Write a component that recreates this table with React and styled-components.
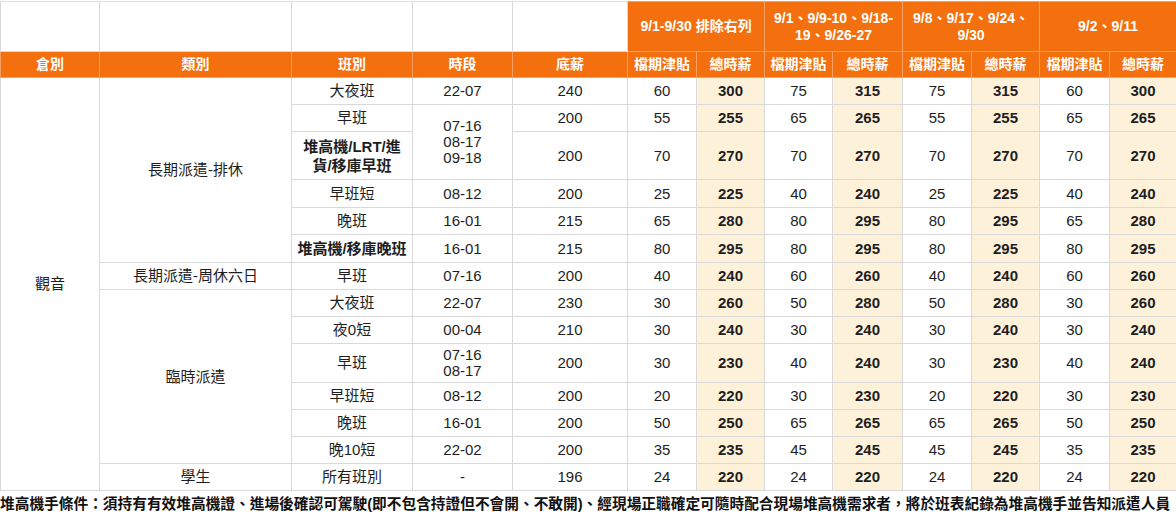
import React from "react";
import styled, { createGlobalStyle } from "styled-components";

const GlobalStyle = createGlobalStyle`
  body {
    margin: 0;
    background: #ffffff;
    font-family: "Liberation Sans", "Noto Sans CJK TC", sans-serif;
    color: #222222;
  }
`;

const colWidths = [99, 192, 121, 100, 115, 69, 68, 68, 70, 69, 68, 70, 67];

const periods = [
  ["9/1-9/30 排除右列"],
  ["9/1、9/9-10、9/18-", "19、9/26-27"],
  ["9/8、9/17、9/24、", "9/30"],
  ["9/2、9/11"],
];

// each row: 班別, 時段 (null = merged with row above), 底薪, then 檔期津貼/總時薪 x4
const rows = [
  { shift: "大夜班", time: ["22-07"], base: 240, pay: [60, 300, 75, 315, 75, 315, 60, 300] },
  { shift: "早班", time: ["07-16", "08-17", "09-18"], timeSpan: 2, base: 200, pay: [55, 255, 65, 265, 55, 255, 65, 265] },
  { shift: ["堆高機/LRT/進", "貨/移庫早班"], bold: true, time: null, base: 200, pay: [70, 270, 70, 270, 70, 270, 70, 270], h: 48 },
  { shift: "早班短", time: ["08-12"], base: 200, pay: [25, 225, 40, 240, 25, 225, 40, 240], h: 28 },
  { shift: "晚班", time: ["16-01"], base: 215, pay: [65, 280, 80, 295, 80, 295, 65, 280] },
  { shift: "堆高機/移庫晚班", bold: true, time: ["16-01"], base: 215, pay: [80, 295, 80, 295, 80, 295, 80, 295], h: 28 },
  { shift: "早班", time: ["07-16"], base: 200, pay: [40, 240, 60, 260, 40, 240, 60, 260] },
  { shift: "大夜班", time: ["22-07"], base: 230, pay: [30, 260, 50, 280, 50, 280, 30, 260] },
  { shift: "夜0短", time: ["00-04"], base: 210, pay: [30, 240, 30, 240, 30, 240, 30, 240] },
  { shift: "早班", time: ["07-16", "08-17"], base: 200, pay: [30, 230, 40, 240, 30, 230, 40, 240], h: 39 },
  { shift: "早班短", time: ["08-12"], base: 200, pay: [20, 220, 30, 230, 20, 220, 30, 230] },
  { shift: "晚班", time: ["16-01"], base: 200, pay: [50, 250, 65, 265, 65, 265, 50, 250] },
  { shift: "晚10短", time: ["22-02"], base: 200, pay: [35, 235, 45, 245, 45, 245, 35, 235] },
  { shift: "所有班別", time: ["-"], base: 196, pay: [24, 220, 24, 220, 24, 220, 24, 220] },
];

// 類別 groups keyed by first row index
const categories = {
  0: { label: "長期派遣-排休", span: 6 },
  6: { label: "長期派遣-周休六日", span: 1 },
  7: { label: "臨時派遣", span: 6 },
  13: { label: "學生", span: 1 },
};

const App = () => {
  return (
    <>
      <GlobalStyle />
      <Page>
        <Table>
          <colgroup>
            {colWidths.map((w, i) => (
              <col key={i} style={{ width: w }} />
            ))}
          </colgroup>
          <thead>
            <HeadRow $h={50}>
              {[0, 1, 2, 3, 4].map((i) => (
                <BlankCell key={i} />
              ))}
              {periods.map((lines, i) => (
                <OrangeCell key={i} colSpan={2}>
                  {lines.map((l, j) => (
                    <Line key={j}>{l}</Line>
                  ))}
                </OrangeCell>
              ))}
            </HeadRow>
            <HeadRow $h={26}>
              {["倉別", "類別", "班別", "時段", "底薪"].map((t) => (
                <OrangeCell key={t}>{t}</OrangeCell>
              ))}
              {periods.map((_, i) => (
                <React.Fragment key={i}>
                  <OrangeCell>檔期津貼</OrangeCell>
                  <OrangeCell>總時薪</OrangeCell>
                </React.Fragment>
              ))}
            </HeadRow>
          </thead>
          <tbody>
            {rows.map((r, i) => (
              <DataRow key={i} $h={r.h || 27}>
                {i === 0 && <Cell rowSpan={rows.length}>觀音</Cell>}
                {categories[i] && (
                  <Cell rowSpan={categories[i].span}>{categories[i].label}</Cell>
                )}
                <Cell $bold={r.bold} $lh={Array.isArray(r.shift) ? 19 : 16}>
                  {Array.isArray(r.shift)
                    ? r.shift.map((l, j) => <Line key={j}>{l}</Line>)
                    : r.shift}
                </Cell>
                {r.time && (
                  <Cell rowSpan={r.timeSpan || 1}>
                    {r.time.map((l, j) => (
                      <Line key={j}>{l}</Line>
                    ))}
                  </Cell>
                )}
                <Cell>{r.base}</Cell>
                {r.pay.map((v, j) =>
                  j % 2 === 1 ? (
                    <Cell key={j} $total $bold>
                      {v}
                    </Cell>
                  ) : (
                    <Cell key={j}>{v}</Cell>
                  )
                )}
              </DataRow>
            ))}
          </tbody>
        </Table>
        <Note>
          堆高機手條件：須持有有效堆高機證、進場後確認可駕駛(即不包含持證但不會開、不敢開)、經現場正職確定可隨時配合現場堆高機需求者，將於班表紀錄為堆高機手並告知派遣人員
        </Note>
      </Page>
    </>
  );
};

// Styled Components
const Page = styled.div`
  width: 1176px;
  height: 516px;
  padding-top: 1px;
  box-sizing: border-box;
  overflow: hidden;
`;

const Table = styled.table`
  width: 1176px;
  table-layout: fixed;
  border-collapse: collapse;
  font-size: 15px;
`;

const HeadRow = styled.tr`
  height: ${({ $h }) => $h}px;
`;

const DataRow = styled.tr`
  height: ${({ $h }) => $h}px;
`;

const BlankCell = styled.th`
  border: 1px solid #d9d9d9;
  border-top-color: #e2e2e2;
  background: #ffffff;
  padding: 0;
`;

const OrangeCell = styled.th`
  background: #f4700e;
  color: #ffffff;
  font-weight: 700;
  font-size: 14px;
  line-height: 17px;
  text-align: center;
  vertical-align: middle;
  padding: 0 2px;
  border: 1px solid #f8a064;
  white-space: nowrap;
`;

const Cell = styled.td`
  border: 1px solid #d9d9d9;
  text-align: center;
  vertical-align: middle;
  padding: 0 2px;
  line-height: ${({ $lh }) => $lh || 16}px;
  font-weight: ${({ $bold }) => ($bold ? 700 : 400)};
  background: ${({ $total }) => ($total ? "#fdf1da" : "#ffffff")};
  color: #1e1e1e;
  white-space: nowrap;
`;

const Line = styled.div`
  line-height: inherit;
`;

const Note = styled.div`
  font-size: 14.7px;
  font-weight: 700;
  line-height: 24px;
  padding-top: 1px;
  white-space: nowrap;
  color: #111111;
`;

export default App;
